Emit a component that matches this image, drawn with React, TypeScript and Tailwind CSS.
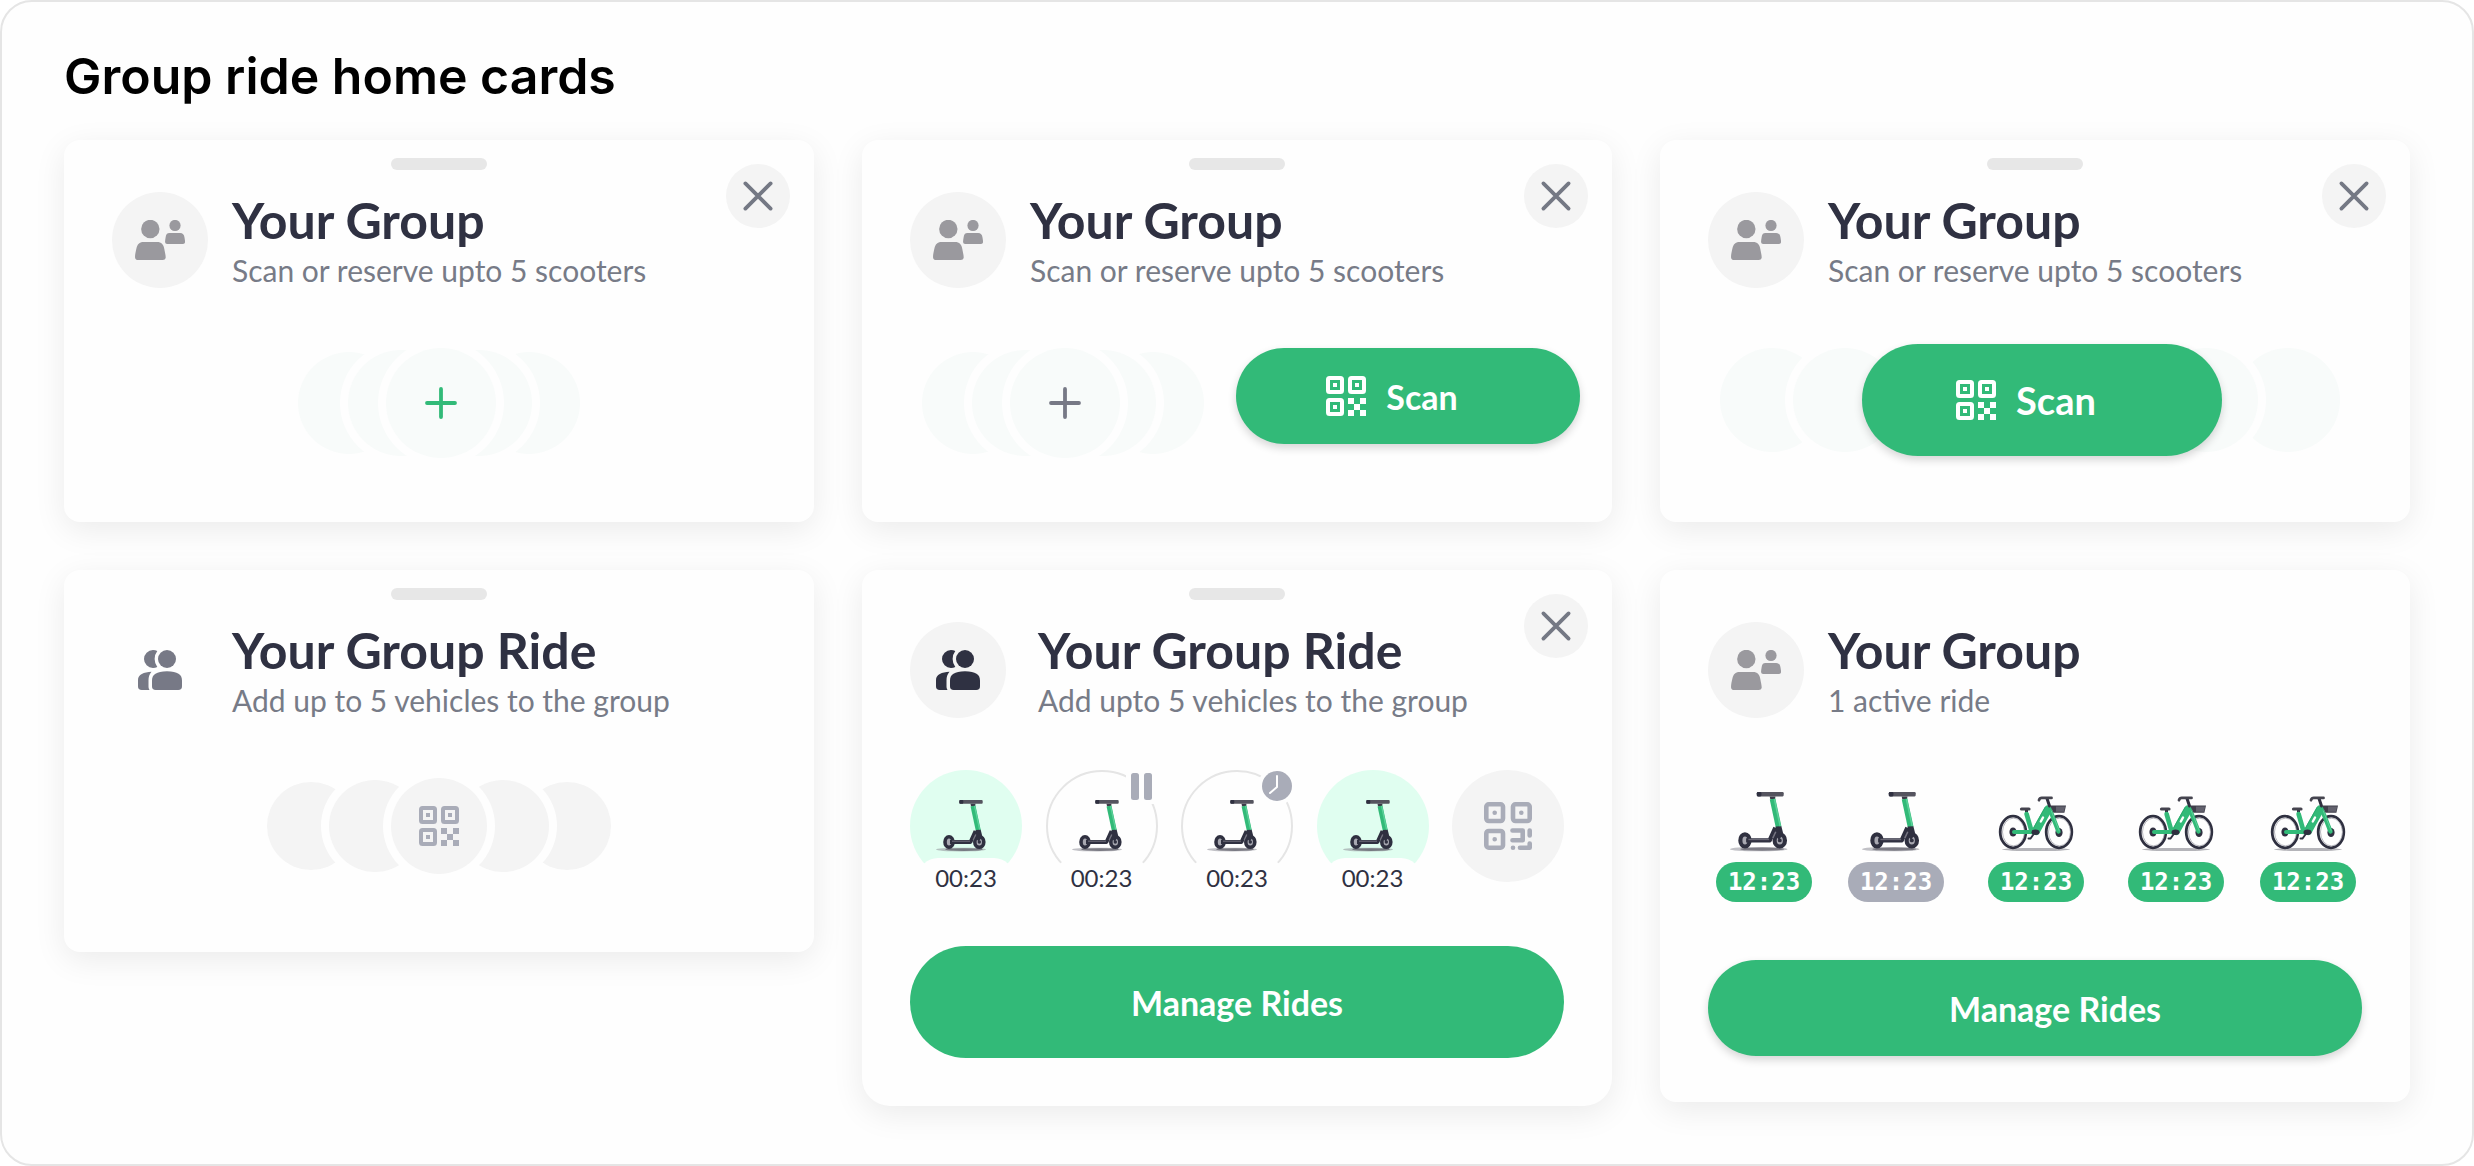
import type { ReactNode } from 'react';
import clsx from 'clsx';

type IconProps = { className?: string };

/* Icones */

function CloseIcon() {
  return (
    <svg viewBox="0 0 32 32" className="size-8" fill="none" stroke="currentColor" strokeWidth="3.8" strokeLinecap="round">
      <path d="M3.4 3.4 28.6 28.6M28.6 3.4 3.4 28.6" />
    </svg>
  );
}

function PlusIcon({ className }: IconProps) {
  return (
    <svg viewBox="0 0 32 32" className={clsx('size-8', className)} fill="none" stroke="currentColor" strokeWidth="3.8" strokeLinecap="round">
      <path d="M16 2v28M2 16h28" />
    </svg>
  );
}

function PeopleIcon() {
  return (
    <svg viewBox="24 28 50 40" className="h-10 w-[50px]" fill="#9a999e">
      <circle cx="39.3" cy="37" r="9.2" />
      <path d="M32.5 50h13.6c4.3 0 6.4 2.5 7.1 6.5.7 3.8 1.8 8 1.4 9.5-.3 1.3-1.3 2-2.8 2H27.2c-1.800 0-2.900-.8-3.100-2.300-.3-2 .5-5.900 1.300-9.200 1-4.200 2.900-6.500 7.100-6.500Z" />
      <circle cx="64" cy="33.5" r="5.6" />
      <path d="M58.5 41h10.6c2.700 0 4 1.700 4.400 4.400.3 2 .7 3.700.5 4.900-.2 1.200-.8 1.700-2 1.700H56.200c-1.400 0-2-.7-2.100-1.900-.1-1.300.2-3 .5-4.700.4-2.900 1.400-4.400 3.900-4.400Z" />
    </svg>
  );
}

function GroupIcon({ className }: IconProps) {
  return (
    <svg viewBox="0 0 44 40" className={clsx('h-10 w-11', className)} fill="currentColor">
      <circle cx="29" cy="9" r="9" />
      <path d="M15 0a9 9 0 0 0 0 18c1.500 0 3-.4 4.300-1.100A13 13 0 0 1 19.300 1.100 9 9 0 0 0 15 0Z" />
      <path d="M29 21.200c5.500 0 9 .9 11.500 2.500 2.500 1.600 3.500 3.600 3.500 7v5.500c0 2.600-1.200 3.800-3.800 3.800H17.800c-2.600 0-3.800-1.200-3.800-3.800v-5.500c0-3.400 1-5.400 3.500-7 2.500-1.600 6-2.500 11.500-2.500Z" />
      <path d="M13.5 21.700C5.800 22.200 0 24.300 0 30v6.200C0 38.800 1.200 40 3.800 40h7.800c-.8-1-1.100-2.300-1.100-3.800v-5.500c0-3.800.8-6.600 3-9Z" />
    </svg>
  );
}

function QrIcon({ className }: IconProps) {
  return (
    <svg viewBox="0 0 40 40" className={clsx('size-10', className)} fill="none">
      <g stroke="currentColor" strokeWidth="4">
        <rect x="2" y="2" width="14" height="14" rx="1.5" />
        <rect x="24" y="2" width="14" height="14" rx="1.5" />
        <rect x="2" y="24" width="14" height="14" rx="1.5" />
      </g>
      <path
        fill="currentColor"
        d="M7 7h4v4H7zM29 7h4v4h-4zM7 29h4v4H7zM22 22h6v6h-6zM34 22h6v6h-6zM28 28h6v6h-6zM22 34h6v6h-6zM34 34h6v6h-6z"
      />
    </svg>
  );
}

function QrRoundIcon() {
  return (
    <svg viewBox="0 0 48 48" className="size-12 text-[#a9acb8]" fill="none" stroke="currentColor" strokeWidth="4.6" strokeLinecap="round" strokeLinejoin="round">
      <rect x="2.3" y="2.3" width="16.7" height="16.7" rx="2.5" />
      <rect x="29" y="2.3" width="16.7" height="16.7" rx="2.5" />
      <rect x="2.3" y="29" width="16.7" height="16.7" rx="2.5" />
      <path d="M10.7 10.7h.01M37.3 10.7h.01M10.7 37.3h.01M28.5 28.5h10.2v9.8H28.5M45.7 28.5v5M29 45.7h.01M36 45.7h9.7V41.5" />
    </svg>
  );
}

function Scooter({ className }: IconProps) {
  return (
    <svg viewBox="0 0 60 52" className={className} fill="none">
      <ellipse cx="25" cy="49.6" rx="25" ry="1.9" fill="#8e8e98" opacity=".55" />
      <ellipse cx="28" cy="49.6" rx="19" ry="1.4" fill="#5c5b67" opacity=".7" />
      <rect x="23.3" y="0" width="23.4" height="3.8" rx="1" fill="#55545f" />
      <rect x="23.3" y="0" width="4" height="3.8" rx="1" fill="#2f3040" />
      <path d="M34.5 3.8h5l-.4 2.7h-4z" fill="#3c3b48" />
      <path d="m37 6 5.3 24.500" stroke="#32ba78" strokeWidth="5" />
      <path d="m38.6 6 5.2 24.300" stroke="#5cd19a" strokeWidth="1.3" />
      <ellipse cx="13" cy="42" rx="4" ry="5.3" stroke="#2f3040" strokeWidth="3.6" fill="#a8a8b1" />
      <ellipse cx="43.3" cy="42" rx="4.5" ry="5.3" stroke="#2f3040" strokeWidth="3.6" fill="#a8a8b1" />
      <path d="M14 42h20.500l5-11" stroke="#2f3040" strokeWidth="3.8" strokeLinejoin="round" />
      <path d="M16 41.2h18" stroke="#696875" strokeWidth="1.2" />
      <path d="m39.7 30 5-.3 1.600 6.500-3.600 5.500-3.600-4.500z" fill="#2f3040" />
      <path d="m37.2 40 2.600-5.500" stroke="#777682" strokeWidth="1.3" />
      <circle cx="43.3" cy="42" r="1.7" fill="#2f3040" />
    </svg>
  );
}

function Bike() {
  return (
    <svg viewBox="0 0 76 56" className="h-14 w-[76px]" fill="none" strokeLinecap="round">
      <ellipse cx="38" cy="53.5" rx="34" ry="1.6" fill="#77777f" opacity=".55" />
      <ellipse cx="15" cy="36" rx="12.8" ry="15.8" stroke="#2f3040" strokeWidth="2.8" />
      <ellipse cx="15.5" cy="36" rx="11" ry="13.9" stroke="#a5a5ad" strokeWidth=".8" />
      <ellipse cx="61" cy="36" rx="12.8" ry="15.8" stroke="#2f3040" strokeWidth="2.8" />
      <ellipse cx="61.5" cy="36" rx="11" ry="13.9" stroke="#a5a5ad" strokeWidth=".8" />
      <ellipse cx="15" cy="36" rx="3.6" ry="4.6" fill="#2f3040" />
      <ellipse cx="61" cy="36.5" rx="3.6" ry="4.6" fill="#2f3040" />
      <path d="M28.5 13.5V16" stroke="#2f3040" strokeWidth="3" />
      <path d="M23.5 13h7.5" stroke="#45444f" strokeWidth="3.2" />
      <path d="m28.6 18 5.2 18" stroke="#32ba78" strokeWidth="4.6" />
      <path d="M16 36h19" stroke="#32ba78" strokeWidth="4" />
      <path d="m38 35 12-21.500" stroke="#32ba78" strokeWidth="8" />
      <path d="m35.5 32 11.500-20.500" stroke="#24a567" strokeWidth=".8" />
      <path d="m51.5 12.5 9 23" stroke="#32ba78" strokeWidth="4.4" />
      <path d="m53.3 15 8 20" stroke="#5cd19a" strokeWidth="1" />
      <path d="m42.8 25.5 2.200-4" stroke="#ffffff" strokeWidth="2.4" />
      <path d="m51.5 10-2.500-7.500" stroke="#2f3040" strokeWidth="3" />
      <path d="M41 4.200c.5-1.600 1.300-2.300 2.800-2.300h9.700" stroke="#45444f" strokeWidth="2.8" />
      <path d="M52 9.500h16l-1.600 7.200H55.500z" fill="#3f3e4a" />
      <path d="M58 10.500h9.200l-1.300 5.300H58z" fill="#62616d" />
      <ellipse cx="37.5" cy="36.2" rx="4" ry="2.7" fill="#2f3040" />
      <path d="m36.5 37-4 5.500h-2" stroke="#2f3040" strokeWidth="1.9" />
    </svg>
  );
}

/* Blocs communs */

type CardProps = {
  title: string;
  subtitle: string;
  icon: ReactNode;
  iconBg?: string;
  gap?: string;
  handle?: boolean;
  closable?: boolean;
  className?: string;
  children: ReactNode;
};

function RideCard({
  title,
  subtitle,
  icon,
  iconBg = 'bg-[#f4f4f4]',
  gap = 'gap-6',
  handle = true,
  closable = true,
  className,
  children,
}: CardProps) {
  return (
    <section
      className={clsx(
        'relative rounded-2xl bg-[#fefefe] px-12 shadow-[0_8px_32px_rgba(0,0,0,0.08)]',
        handle ? 'pt-[18px]' : 'pt-[50px]',
        className
      )}
    >
      {handle && <div className="mx-auto mb-5 h-3 w-24 rounded-md bg-[#e7e7e7]" />}
      {closable && (
        <button
          type="button"
          aria-label="Close"
          className="absolute top-6 right-6 flex size-16 items-center justify-center rounded-full bg-[#f4f4f4] text-[#747884]"
        >
          <CloseIcon />
        </button>
      )}
      <header className={clsx('flex items-center', gap)}>
        <div className={clsx('flex size-24 shrink-0 items-center justify-center rounded-full', iconBg)}>{icon}</div>
        <div>
          <h2 className="text-[50px] leading-[60px] font-bold text-[#2f3142]">{title}</h2>
          <p className="text-[30px] leading-10 text-[#777b87]">{subtitle}</p>
        </div>
      </header>
      {children}
    </section>
  );
}

function PlusStack({ iconClass }: { iconClass: string }) {
  return (
    <div className="flex items-center">
      <div className="size-[102px] rounded-full bg-[#f8fbfa]" />
      <div className="relative -ml-[52px] size-[106px] rounded-full bg-[#f8fbfa] ring-8 ring-[#fefefe]" />
      <button
        type="button"
        aria-label="Add vehicle"
        className="relative z-20 -mr-[70px] -ml-[68px] flex size-[110px] items-center justify-center rounded-full bg-[#f8fbfa] ring-8 ring-[#fefefe]"
      >
        <PlusIcon className={iconClass} />
      </button>
      <div className="relative z-10 size-[106px] rounded-full bg-[#f8fbfa] ring-8 ring-[#fefefe]" />
      <div className="-ml-[54px] size-[102px] rounded-full bg-[#f8fbfa]" />
    </div>
  );
}

const rides = [
  { state: 'active', time: '00:23' },
  { state: 'paused', time: '00:23' },
  { state: 'reserved', time: '00:23' },
  { state: 'active', time: '00:23' },
];

const vehicles = [
  { type: 'scooter', time: '12:23', pill: 'bg-[#32ba78]', space: 'mr-9' },
  { type: 'scooter', time: '12:23', pill: 'bg-[#a9acb8]', space: 'mr-11' },
  { type: 'bike', time: '12:23', pill: 'bg-[#32ba78]', space: 'mr-11' },
  { type: 'bike', time: '12:23', pill: 'bg-[#32ba78]', space: 'mr-9' },
  { type: 'bike', time: '12:23', pill: 'bg-[#32ba78]', space: '' },
];

export default function App() {
  return (
    <main className="min-h-screen rounded-[32px] border-2 border-[#e5e5e5] bg-[#fefefe] px-[62px] pt-11 pb-14 font-['Lato',sans-serif]">
      <h1 className="text-[50px] leading-[60px] font-semibold text-black font-['Inter',sans-serif]">Group ride home cards</h1>

      <div className="mt-[34px] grid grid-cols-3 items-start gap-12">
        <RideCard title="Your Group" subtitle="Scan or reserve upto 5 scooters" icon={<PeopleIcon />} className="pb-16">
          <div className="mt-[58px] flex justify-center">
            <PlusStack iconClass="text-[#32ba78]" />
          </div>
        </RideCard>

        <RideCard title="Your Group" subtitle="Scan or reserve upto 5 scooters" icon={<PeopleIcon />} className="pb-16">
          <div className="-mr-4 mt-[58px] flex items-start justify-between pl-3">
            <PlusStack iconClass="text-[#777986]" />
            <button
              type="button"
              className="flex h-24 w-[344px] items-center justify-center gap-5 rounded-full bg-[#32ba78] pr-8 text-[34px] font-bold text-white shadow-[0_4px_8px_rgba(0,0,0,0.16)]"
            >
              <QrIcon />
              Scan
            </button>
          </div>
        </RideCard>

        <RideCard title="Your Group" subtitle="Scan or reserve upto 5 scooters" icon={<PeopleIcon />} className="pb-[66px]">
          <div className="mt-[54px] flex items-center pl-3">
            <div className="size-[104px] rounded-full bg-[#f8fbfa]" />
            <div className="relative -ml-[31px] size-[104px] rounded-full bg-[#f8fbfa] ring-8 ring-[#fefefe]" />
            <button
              type="button"
              className="relative z-20 -mr-[68px] -ml-[35px] flex h-28 w-[360px] items-center justify-center gap-5 rounded-full bg-[#32ba78] pr-8 text-[38px] font-bold text-white shadow-[0_4px_8px_rgba(0,0,0,0.16)]"
            >
              <QrIcon />
              Scan
            </button>
            <div className="relative z-10 size-[104px] rounded-full bg-[#f8fbfa] ring-8 ring-[#fefefe]" />
            <div className="-ml-[22px] size-[104px] rounded-full bg-[#f8fbfa]" />
          </div>
        </RideCard>

        <RideCard
          title="Your Group Ride"
          subtitle="Add up to 5 vehicles to the group"
          icon={<GroupIcon className="text-[#777986]" />}
          iconBg="bg-transparent"
          closable={false}
          className="pb-[78px]"
        >
          <div className="mt-[58px] flex items-center justify-center">
            <div className="size-[88px] rounded-full bg-[#f4f4f4]" />
            <div className="relative -ml-[26px] size-[92px] rounded-full bg-[#f4f4f4] ring-8 ring-[#fefefe]" />
            <button
              type="button"
              aria-label="Scan code"
              className="relative z-20 -mx-[30px] flex size-24 items-center justify-center rounded-full bg-[#f4f4f4] text-[#a9acb8] ring-8 ring-[#fefefe]"
            >
              <QrIcon />
            </button>
            <div className="relative z-10 size-[92px] rounded-full bg-[#f4f4f4] ring-8 ring-[#fefefe]" />
            <div className="-ml-[26px] size-[88px] rounded-full bg-[#f4f4f4]" />
          </div>
        </RideCard>

        <RideCard
          title="Your Group Ride"
          subtitle="Add upto 5 vehicles to the group"
          icon={<GroupIcon className="text-[#2f3142]" />}
          gap="gap-8"
          className="rounded-b-[28px] pb-12"
        >
          <div className="mt-[50px] flex items-start justify-between">
            {rides.map((ride, i) => (
              <div key={i} className="flex flex-col items-center">
                <div
                  className={clsx(
                    'relative flex size-28 items-center justify-center rounded-full',
                    ride.state === 'active' ? 'bg-[#e0fef0]' : 'border-2 border-[#e5e5e5]'
                  )}
                >
                  <Scooter className="h-[52px] w-[60px]" />
                  {ride.state === 'paused' && (
                    <svg viewBox="0 0 30 32" className="absolute top-0 right-0 h-8 w-[30px] bg-[#fefefe]" fill="#a9acb8">
                      <rect x="5" y="1" width="8" height="27" rx="2.5" />
                      <rect x="18" y="1" width="8" height="27" rx="2.5" />
                    </svg>
                  )}
                  {ride.state === 'reserved' && (
                    <svg viewBox="0 0 30 30" className="absolute -top-px -right-px size-[30px] rounded-full bg-[#a9acb8] ring-4 ring-[#fefefe]" fill="none" stroke="#ffffff" strokeWidth="2" strokeLinecap="round" strokeLinejoin="round">
                      <path d="M15 5v11l-7 6" />
                    </svg>
                  )}
                </div>
                <span className="relative -mt-6 flex h-10 w-24 items-center justify-center rounded-full bg-[#fefefe] text-2xl text-[#2f3142]">
                  {ride.time}
                </span>
              </div>
            ))}
            <button type="button" aria-label="Scan code" className="flex size-28 items-center justify-center rounded-full bg-[#f4f4f4]">
              <QrRoundIcon />
            </button>
          </div>
          <button type="button" className="mt-12 h-28 w-full rounded-full bg-[#32ba78] text-[34px] font-bold text-white">
            Manage Rides
          </button>
        </RideCard>

        <RideCard
          title="Your Group"
          subtitle="1 active ride"
          icon={<PeopleIcon />}
          handle={false}
          closable={false}
          className="pb-[46px]"
        >
          <div className="mt-[72px] flex items-end pl-2">
            {vehicles.map((v, i) => (
              <div key={i} className={clsx('flex flex-col items-center gap-[10px]', v.space)}>
                {v.type === 'scooter' ? <Scooter className="h-[60px] w-[69px]" /> : <Bike />}
                <span
                  className={clsx(
                    "flex h-10 w-24 items-center justify-center rounded-full text-2xl font-bold text-white font-['DejaVu_Sans_Mono',monospace]",
                    v.pill
                  )}
                >
                  {v.time}
                </span>
              </div>
            ))}
          </div>
          <button
            type="button"
            className="mt-[58px] h-24 w-full rounded-full bg-[#32ba78] pl-10 text-[34px] font-bold text-white shadow-[0_4px_8px_rgba(0,0,0,0.16)]"
          >
            Manage Rides
          </button>
        </RideCard>
      </div>
    </main>
  );
}
